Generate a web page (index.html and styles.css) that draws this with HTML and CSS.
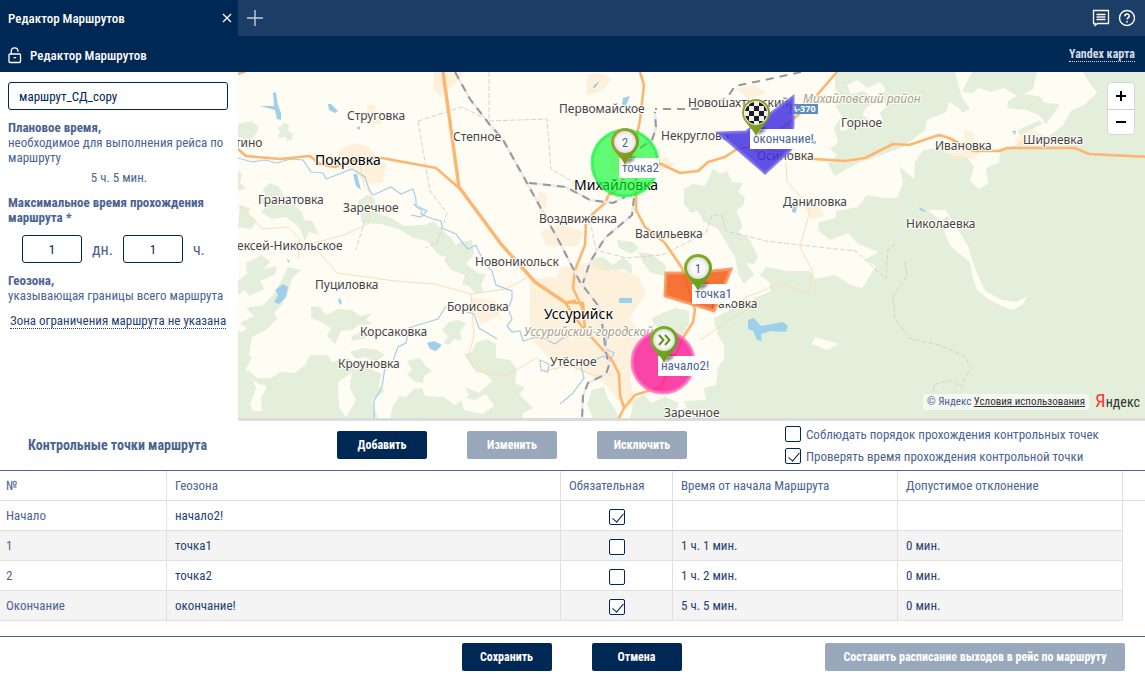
FILE: index.html
```html
<!DOCTYPE html>
<html lang="ru">
<head>
<meta charset="utf-8">
<meta name="viewport" content="width=device-width, initial-scale=1">
<title>Редактор Маршрутов</title>
<link rel="stylesheet" href="styles.css">
</head>
<body>
<div class="app">
  <header class="tabs">
    <div class="tab">
      <span class="tab-title">Редактор Маршрутов</span>
      <button class="icon-btn" type="button" aria-label="Закрыть вкладку">
        <svg width="10" height="10" viewBox="0 0 10 10"><path d="M1 1l8 8M9 1L1 9" stroke="#fff" stroke-width="1.3" fill="none"/></svg>
      </button>
    </div>
    <button class="icon-btn add-tab" type="button" aria-label="Новая вкладка">
      <svg width="18" height="18" viewBox="0 0 18 18"><path d="M9 1v16M1 9h16" stroke="#c3cddb" stroke-width="1.4" fill="none"/></svg>
    </button>
    <div class="tools">
      <button class="icon-btn" type="button" aria-label="Сообщения">
        <svg width="18" height="18" viewBox="0 0 18 18" fill="none" stroke="#fff" stroke-width="1.3"><path d="M1.500 1.500h15v13h-11L3 16.500v-2H1.500z"/><path d="M4.500 5.500h9M4.500 10.500h9" /><path d="M4.500 8h9" stroke="#b5c1d0" stroke-width="2"/></svg>
      </button>
      <button class="icon-btn" type="button" aria-label="Справка">
        <svg width="18" height="18" viewBox="0 0 18 18" fill="none" stroke="#fff" stroke-width="1.400"><circle cx="9" cy="9" r="7.500"/><path d="M6.800 7.300c0-3 4.500-2.900 4.500-.3 0 1.700-2.200 1.700-2.200 3.600M9.100 11.900v1.500" stroke-width="1.500"/></svg>
      </button>
    </div>
  </header>
  <div class="titlebar">
    <svg width="14" height="18" viewBox="0 0 14 18" fill="none" stroke="#fff" stroke-width="1.300"><rect x="1" y="8" width="11.500" height="8.500" rx="1"/><path d="M3.300 8V5.200C3.300 .8 9.700.6 10 5v.8M5.500 11.700h2.600"/></svg>
    <h1 class="title">Редактор Маршрутов</h1>
    <a class="map-link" href="#map">Yandex карта</a>
  </div>

  <div class="work">
    <aside class="side">
      <input class="field name" type="text" value="маршрут_СД_copy" aria-label="Название маршрута">
      <p class="para"><b>Плановое время,</b><br>необходимое для выполнения рейса по маршруту</p>
      <p class="para plan">5 ч. 5 мин.</p>
      <p class="para"><b>Максимальное время прохождения маршрута *</b></p>
      <div class="limits">
        <input class="field num" id="days" type="text" value="1"><label for="days">дн.</label>
        <input class="field num" id="hours" type="text" value="1"><label for="hours">ч.</label>
      </div>
      <p class="para"><b>Геозона,</b><br>указывающая границы всего маршрута</p>
      <a class="zone" href="#zone">Зона ограничения маршрута не указана</a>
    </aside>

    <section class="map" id="map" aria-label="Карта">
      <svg class="canvas" viewBox="238 72 907 346" preserveAspectRatio="xMidYMid slice">
        <defs>
          <linearGradient id="rim" x1="0" y1="0" x2="1" y2="1"><stop offset="0" stop-color="#86b32b"/><stop offset="1" stop-color="#5c9a10"/></linearGradient>
          <linearGradient id="rim2" x1="0" y1="0" x2="1" y2="1"><stop offset="0" stop-color="#a5a53a"/><stop offset="1" stop-color="#6d9612"/></linearGradient>
          <radialGradient id="face"><stop offset="0" stop-color="#fff"/><stop offset=".7" stop-color="#f4f4f4"/><stop offset="1" stop-color="#dcdcdc"/></radialGradient>
          <radialGradient id="shade"><stop offset="0" stop-color="#000" stop-opacity=".5"/><stop offset="1" stop-color="#000" stop-opacity="0"/></radialGradient>
          <clipPath id="disc"><circle cx="0" cy="0" r="11"/></clipPath>
        </defs>
        <rect x="0" y="0" width="1400" height="600" fill="#fffcf4"/>

        <g class="forest">
          <path d="M238 124l13-3 7 5-1 7-7 7-12-3zM283 122l6 3-1 6 5 3-1 6-5 1-1-4-8 1 2-7-3-3 6-3zM238 170l4 4-2 9 6 5-8 3z"/>
          <path d="M262 190l8-7 9 4 5 9-3 6 12 2 9 8 2 8 8 1 7 14-10-3-4 9-6-14-13-10-14 2-11-7 5-6-8-4 8-8zM240 205l10 3-2 7 9 6-6 8-13-2z"/>
          <path d="M358 201l9-6 8 4 2 14 14 5 13 8 21-1 9-4 6 8 10 8 10 14-7 7-14-3-12-14-14-3-12-8-20-6-19-1z"/>
          <path d="M246 263l16-8 8 7-6 7 13-3-2 9-15 6 4 8-15 7-4-6-7 5v-14l9-7zM288 267l13 3-9 8-4 14-6 13-8 8 3 6-11 11-14 7-3 19-12 3-2-22 12-8-7-6 14-7-8-8 18-3 12-14zM238 330l9 7-4 15 9 5-7 14-7 2z"/>
          <path d="M311 306l9 1 6 8 12-6 14 1 8 6 12-3-6 7 7 4-15 1-5 5-12 1-6 13-8-8 4-8-8-5-12-5zM351 337l15-9 8 4-9 6-12 3zM350 352l13-4 14 2 8 5-10 7-10-5-9 2z"/>
          <path d="M458 243l14-3 2 14-8 10 12 9 8 1-5 11 3 6-8 3-7-8-7-2 3-9-14-5-7-10zM449 322l9-2 8 3-6 9 2 9-8-2-5 6-5-2 4-7-6-6zM407 361l13-3 5 7 7 6-8 5-1 7-7-1-9-7 5-5z"/>
          <path d="M432 239l8-2-6-11 9 2 3 9 6 17 8 3-4 8-9-3-4-11z"/>
          <path d="M238 368l11 3 8 7 14 0 9-6 15 1 10-8 5-10 18 0 4 7 15-4 10 7 12-3 5 9 8 3-4 12 13 9 15 2 8-8 8-1 3 8 19 1 11 8 14-10-4-8 14 6 13-12-6-7-10-2-8-11-4-7 8-2 4-9 10-4 10 5 0 14 14 2 7 9-2 14 10 5-6 6 14 14-10 5 0 10h-290z"/>
          <path d="M589 259l14-2 10 8 10-8 9 8 0 9-10-5-14 2-13-2zM617 240l16 2 6 6-8 6-12-6zM638 252l14 2 14 12-1 10-14-3-8-10zM652 318l10-5 14-5 13 3 0 12-6 12-15-6-14-4z"/>
          <path d="M592 390l12-3 4 12 13 20h-28l-6-15zM634 400l10-6 7 9 14-6 14 6-3 7 9 8h-55z"/>
          <path d="M684 189l9-5 12 2 8-17 7 5 7-3 5 11 11 1-5 9 7 5-2 9-7 4 7 17-5 5 12 8 8 17-4 7-8-1 8 12-10 9-6-10-3-17-8-13-9-15-15-8-5-10-7 2-7-9z"/>
          <path d="M835 72h120l-4 9 8 7 4 15-6 4-8-5-3 10-19 8-2 10-22 17-47 17-21 12-7-12 9-9-7-6 8-7-4-14 8-12-7-10 8-5-8-12zM947 72h8l7 26 8 11-7 4-11-12zM962 92l10-20h65l-4 17-14 8-15-9-13 4-13-4-5 5zM1008 101l12-7 19 2 6 7 15 1-6 9-8 11-7-9-13-5-19-2zM1018 130l22-10 2 4-22 12z"/>
          <path d="M1072 72h73v346H690l-6-17 22-1-2-12 12-3 2-18 6-8 0-14-8-13-2-14 12-6 14-10 7 4 9-9 14-5 0-9-10-8 6-8 22 4 22 0 5 8 20-4 16 10 11 3 14-22-12-6 14-8-20-8-10-11-18 7-12-10 1-8 17-4 0-7 22-4 9-12 18 3 12 0 6-16-4-16 15 13 1-17 8-12 16-2 15 8 12 0 8 11-4 14 9 8 9-6-2-15 13-5 1-11 18-8 5-6 12 6 14-8 14-11 8-14 14-7 12-11-10-14-11-22-9-8-9-13z"/>
        </g>
        <path class="bare" d="M700 330l10-9 8 10-4 10 7 9-1 15-14 15-8 3zM950 245h18l5 18 7 17 5 11 17 9 14 2 12-6-6 9-10 5-10-4-14-7-11-9-4-12-3-16-14-11zM812 344l3-7 24 7-12 6zM847 85l10-5 11 8 12-6 6 8-13 7-10-6-12 3zM867 107l12-8 8 6-7 8 3 8-12-1-9-5zM840 118l12 2-5 10-7 1zM950 245l-6-14 6-15-10 4-12-10 18 0 15 25 6 10zM250 405l6-17-3-8 6 4 8 2-6 12 1 13-9 0zM338 382l14-10-2 16 6 12-10 17-7-10zM372 400l12-8 7-10 8 16-6 8-3 12-12 0zM460 396l14 4 12-6 8 12-12 8-18-4z"/>
        <path fill="#fde9c9" opacity=".6" d="M434 72h30l-10 13-14 12-7-9zM341 148l15-5 13 4 8 11 9 6-3 19-15 1-14-12-20-10zM366 105h8l8 19-10 0zM588 74l16 0 8 6-13 12-13 4zM540 232l20-8 24 8-6 14-32 0zM560 268l40-8 6 10 8-2 24 8 8 18-10 14-14 24-22-2-24-4-24 6-17 2zM530 282l18-6 36 8 30-2 9 16-7 12 20 15 2 20-8 36 6 22-10 6-22-26-30-16-26-10-18-20zM470 297l25 4 5 14-20 10-6-18zM950 150l22-1 8 4-8 6-22 0zM964 130l9 2 2 18-11 0zM1015 139l15-10 14 6 2 12-28 0zM538 192l9 2-1 14-9-4zM735 88l20-3 12 8-18 6zM610 150l24-6 8 12-20 20-12-6zM650 160l16-3 8 8-16 6zM805 206l14-2 6 12-14 4z"/>

        <g class="lines">
          <path stroke="#d9d2ca" stroke-dasharray="5 2" d="M489 72v49l58-2 4 50 24 14 18-2M418 121l12 70 17 22-10 30-12 5M418 121l44-14 28 14M365 220l-9 30M590 220l6 30 30 8 36-3 44-22 6-18 10 0 4 16 40 10 70 8 20 2 30 28 2-30 8-5M905 262l2 14-14 20 2 22 14 20 33 8 22 10 7 12-10 18M932 405l2-20 15-5 15 8"/>
          <path stroke="#fddcb8" d="M238 205l14 12 10 12 26-2 12 12-2 20M317 250l20 23 58 8 40 3 36 10 35-5 22-12M360 165l4 18 7 12-2 28-25 12-30 8M471 294l3 42-6 20 5 10 15 9 20 0 30-18M540 371l30-5 26 10 16-2M742 310l2-12 18-7 20-9 20 10 7 0 4-20-13-25 10-36-10-15-13-14-1-20M700 340l30-20 20-12"/>
          <g stroke="#a4cfe8" stroke-width="1.200">
            <path d="M238 158l14 4 13-2 12 3 14-4 12 1 8 12 12 1 3 6 8-3 18-7 5 3 8 5 4 12 4 6 18-8 10 7 12-5 3 10v8l6 3-1 4 12 5 8 2 1 7 14 6 6 8 6 7 8-4 2 5 7 13 7 8 4 14 16 6 0 8-4 10 4 10-5 7 5 6 8-1 3 10 13-4 9 2 10 5 9-7 17-2 14-3 12 3-1 14 8 4-4 8-7-5-8 4-14 6 3 12-12 16-12 10"/>
            <path d="M413 204l14 7-6 6-10-2M446 306l-8 13-17 5-12 4-3 15-8 4-5 14-8 6-3 20-8 14 0 18M460 310l14 4 5 14 10 6 8 5M540 360l9 4-1 8-7-2z"/>
          </g>
          <g stroke="#fdb66f" stroke-width="2.600" stroke-linejoin="round">
            <path d="M238 149l8 7 34 3 30-3 10 8 15 3 17-6 30-3 54 10 23 20"/>
            <path d="M573 303l10 0 2 27 27 30 7 14 1 21 4 13M610 192l-5 11-19 17-1 25-10 25-2 18 10 22M566 304l14 20 5 6"/>
            <path stroke-width="3.400" d="M443 72l16 115 42 57 34 38 31 21 10-2"/>
            <path d="M640 72l4 13-4 35-4 20-8 25-8 22-10 8M636 165l0 45 9 17 20 16 17 25 13 42-2 12-10 16-22 49-26 8-11 13-6 12"/>
            <path d="M632 160l29 4 19 9 18-2 10-9 17-5 12-8 18-3 17 4 42 9 31 2 20-3 28-14 16 1 30-10 10 3 25 13 25 0 8-3h68l14 6 60 3"/>
            <path d="M837 72l-32 37-50 43M238 74l8-3"/>
          </g>
          <g stroke="#eceaee" stroke-width="2.600"><path id="rail1" d="M455 72l15 27 20 26 12 13 25 45 33 60 20 39 20 26 6 44 3 13-3 9-18 9-5 13-1 24"/><path id="rail2" d="M529 183l37 4 24 13 23 3 12-6M634 198l-2 17-27 23-15 24-7 21M640 148l12-8 4-12-1-16"/></g>
          <g stroke="#98989a" stroke-width="2" stroke-dasharray="8 6"><use href="#rail1"/><use href="#rail2"/><path d="M801 72l-41 9-25 5-8 12-27 11h-45"/></g>
        </g>
        <path fill="#9fd0ea" d="M273 92l3 1 2 12 3 8 0 7-4-1-2-9-15-4 14 0zM328 104l3 0 7 7-3 2-6-3zM275 290l8-6 5 3-2 10-7 7-5-2 4-7zM427 343l7-2 8 4-6 6-6-2zM748 320l6-2 7 8 22-4 5 4-2 6-16-1-9 3 1 7-5-1-4-9-5-2zM594 85l6-4-5 7-2 0zM623 98l7-2-2 5-3 6-3-3zM792 207l5-1-1 7-4-1zM1012 131l4 0-1 4zM919 207l6 3 0 2-5-2zM356 128l4-2 0 4zM353 174l4 0 4 16-5-4zM338 300l2-2 2 5-2 2zM287 259l3 2-2 2zM619 298h13v5h-13zM813 141h3v3h-3z"/>
        <g><rect x="790" y="104" width="28" height="10" fill="#5b8cc4"/><text x="791" y="112" class="road-no">А-370</text></g>

        <g class="towns">
          <text x="347" y="120">Струговка</text><text x="453" y="141">Степное</text><text x="228" y="147">ятино</text>
          <text x="258" y="204">Гранатовка</text><text x="343" y="212">Заречное</text><text x="230" y="250">лексей-Никольское</text>
          <text x="315" y="289">Пуциловка</text><text x="360" y="336">Корсаковка</text><text x="338" y="368">Кроуновка</text>
          <text x="447" y="311">Борисовка</text><text x="475" y="266">Новоникольск</text><text x="559" y="113">Первомайское</text>
          <text x="688" y="107">Новошахтинский</text><text x="661" y="140">Некруглово</text><text x="757" y="160">Осиновка</text>
          <text x="783" y="206">Даниловка</text><text x="539" y="223">Воздвиженка</text><text x="635" y="238">Васильевка</text>
          <text x="711" y="308">Раковка</text><text x="550" y="366">Утёсное</text><text x="664" y="417">Заречное</text>
          <text x="841" y="127">Горное</text><text x="935" y="150">Ивановка</text><text x="1023" y="144">Ширяевка</text><text x="906" y="228">Николаевка</text>
          <g class="city"><text x="315" y="165">Покровка</text><text x="574" y="190">Михайловка</text><text x="544" y="319">Уссурийск</text></g>
          <g class="district"><text x="803" y="103">Михайловский район</text><text x="524" y="336">Уссурийский городской</text></g>
        </g>

        <g stroke-width="3">
          <circle cx="625" cy="163" r="33" fill="#00fa28" fill-opacity=".62" stroke="#19f040" stroke-opacity=".7"/>
          <circle cx="663" cy="362" r="31" fill="#f81c98" fill-opacity=".82" stroke="#ff70bc" stroke-opacity=".8"/>
          <path d="M719 133l27-1 47-35v28l-2 24-26 24z" fill="#4030dc" fill-opacity=".84" stroke="#7468ee" stroke-opacity=".85"/>
          <path d="M666 273l27 0 38-4-17 42-49-15z" fill="#f2601a" fill-opacity=".88" stroke="#f79660" stroke-opacity=".9"/>
        </g>

        <g class="pins">
          <g><rect x="619" y="158" width="40" height="20"/><text x="622" y="172">точка2</text></g>
          <g><rect x="692" y="284" width="40" height="20"/><text x="695" y="298">точка1</text></g>
          <g><rect x="658" y="356" width="50" height="20"/><text x="661" y="370">начало2!</text></g>
          <g><rect x="750" y="129" width="62" height="20"/><text x="753" y="143">окончание!</text></g>
          <g transform="translate(625 142)"><ellipse cx="5" cy="18" rx="8" ry="4" fill="url(#shade)" transform="rotate(-28 5 18)"/><path d="M0 23C-3 15-14 9-14 0a14 14 0 0 1 28 0C14 9 3 15 0 23z" fill="url(#rim2)"/><circle r="11" fill="url(#face)"/><text class="pin-no" x="0" y="5">2</text></g>
          <g transform="translate(698 268)"><ellipse cx="5" cy="18" rx="8" ry="4" fill="url(#shade)" transform="rotate(-28 5 18)"/><path d="M0 23C-3 15-14 9-14 0a14 14 0 0 1 28 0C14 9 3 15 0 23z" fill="url(#rim)"/><circle r="11" fill="url(#face)"/><text class="pin-no" x="0" y="5">1</text></g>
          <g transform="translate(664 340)"><ellipse cx="5" cy="18" rx="8" ry="4" fill="url(#shade)" transform="rotate(-28 5 18)"/><path d="M0 23C-3 15-14 9-14 0a14 14 0 0 1 28 0C14 9 3 15 0 23z" fill="url(#rim)"/><circle r="11" fill="url(#face)"/><path d="M-5-5l4.500 5-4.500 5M1-5l4.500 5L1 5" fill="none" stroke="#5d9414" stroke-width="2"/></g>
          <g transform="translate(756 113)"><ellipse cx="5" cy="18" rx="8" ry="4" fill="url(#shade)" transform="rotate(-28 5 18)"/><path d="M0 23C-3 15-14 9-14 0a14 14 0 0 1 28 0C14 9 3 15 0 23z" fill="url(#rim2)"/><circle r="12" fill="#eee"/><path clip-path="url(#disc)" fill="#1c1c1c" d="M-7-12h5v5h-5zM3-12h5v5H3zM-12-7h5v5h-5zM-2-7h5v5h-5zM8-7h5v5H8zM-7-2h5v5h-5zM3-2h5v5H3zM-12 3h5v5h-5zM-2 3h5v5h-5zM8 3h5v5H8zM-7 8h5v5h-5zM3 8h5v5H3z"/></g>
        </g>
      </svg>
      <div class="zoom">
        <button type="button" aria-label="Приблизить"><svg width="10" height="10" viewBox="0 0 10 10"><path d="M5 0v10M0 5h10" stroke="#000" stroke-width="2"/></svg></button>
        <button type="button" aria-label="Отдалить"><svg width="10" height="10" viewBox="0 0 10 10"><path d="M0 5h10" stroke="#000" stroke-width="2"/></svg></button>
      </div>
      <div class="credits"><span class="copy">© Яндекс <a href="#terms">Условия использования</a></span><span class="brand"><span class="ya">Я</span>ндекс</span></div>
    </section>
  </div>

  <section class="bar">
    <h2 class="bar-title">Контрольные точки маршрута</h2>
    <div class="actions">
      <button class="btn" type="button">Добавить</button>
      <button class="btn" type="button" disabled>Изменить</button>
      <button class="btn" type="button" disabled>Исключить</button>
    </div>
    <div class="options">
      <label class="option"><input class="check" type="checkbox">Соблюдать порядок прохождения контрольных точек</label>
      <label class="option"><input class="check" type="checkbox" checked>Проверять время прохождения контрольной точки</label>
    </div>
  </section>

  <table class="points">
    <colgroup><col class="c-no"><col class="c-zone"><col class="c-must"><col class="c-time"><col class="c-time"><col class="c-rest"></colgroup>
    <thead><tr><th>№</th><th>Геозона</th><th>Обязательная</th><th>Время от начала Маршрута</th><th>Допустимое отклонение</th><th></th></tr></thead>
    <tbody>
      <tr><td>Начало</td><td>начало2!</td><td><input class="check" type="checkbox" checked aria-label="Обязательная: начало2!"></td><td></td><td></td><td></td></tr>
      <tr><td>1</td><td>точка1</td><td><input class="check" type="checkbox" aria-label="Обязательная: точка1"></td><td>1 ч. 1 мин.</td><td>0 мин.</td><td></td></tr>
      <tr><td>2</td><td>точка2</td><td><input class="check" type="checkbox" aria-label="Обязательная: точка2"></td><td>1 ч. 2 мин.</td><td>0 мин.</td><td></td></tr>
      <tr><td>Окончание</td><td>окончание!</td><td><input class="check" type="checkbox" checked aria-label="Обязательная: окончание!"></td><td>5 ч. 5 мин.</td><td>0 мин.</td><td></td></tr>
    </tbody>
  </table>

  <footer class="foot">
    <div class="main-actions">
      <button class="btn" type="button">Сохранить</button>
      <button class="btn" type="button">Отмена</button>
    </div>
    <button class="btn wide" type="button" disabled>Составить расписание выходов в рейс по маршруту</button>
  </footer>
</div>
</body>
</html>
```
FILE: styles.css
```css
:root {
  --navy: #002855;
  --blue: #4b6391;
  --ink: #1f426f;
  --line: #e0e0e0;
  --ui: "Roboto Condensed", "Liberation Sans Narrow", Roboto, sans-serif;
}
* { box-sizing: border-box; }
body { margin: 0; background: #fff; color: var(--blue); font: 13px/15px var(--ui); }
h1, h2, p { margin: 0; }
button, input { font: inherit; }

.app { display: flex; flex-direction: column; min-height: 100vh; }

.tabs { display: flex; height: 36px; background: #1b3d66; }
.tab { display: flex; align-items: center; justify-content: space-between; width: 238px; padding: 0 6px 0 8px; background: var(--navy); color: #fff; font-weight: 500; }
.icon-btn { display: flex; padding: 0; border: 0; background: none; cursor: pointer; }
.add-tab { align-items: center; padding: 0 8px; }
.tools { display: flex; align-items: center; gap: 8px; margin-left: auto; padding-right: 9px; }

.titlebar { display: flex; align-items: center; gap: 8px; height: 36px; padding: 2px 10px 0 8px; background: var(--navy); color: #fff; }
.title { font-size: 13px; font-weight: 500; }
.map-link { margin-left: auto; color: #d3dbe6; font-weight: bold; font-size: 12px; text-decoration: none; border-bottom: 1px dotted #d3dbe6; line-height: 13px; }

.work { display: flex; flex: 1; min-height: 349px; }
.side { width: 238px; padding: 10px 8px; }
.field { height: 28px; border: 1px solid var(--navy); border-radius: 3px; background: #fff; color: var(--navy); }
.name { width: 220px; padding: 0 10px; }
.para { margin-top: 10px; }
.plan { margin: 5px 0 10px; text-align: center; }
.limits { display: flex; align-items: center; gap: 10px; padding-left: 14px; margin: 10px 0; font-size: 16px; }
.num { width: 60px; text-align: center; font-size: 13px; }
.zone { display: inline-block; margin: 11px 0 0 2px; color: var(--ink); text-decoration: none; border-bottom: 1px dotted var(--ink); line-height: 14px; white-space: nowrap; }

.map { position: relative; flex: 1; border-bottom: 3px solid #dcdcdc; overflow: hidden; }
.canvas { position: absolute; inset: 0; width: 100%; height: 100%; }
.forest { fill: #e3efda; }
.bare { fill: #fffcf4; }
.lines { fill: none; }
.towns { font: 12px "Noto Sans", "Open Sans", sans-serif; fill: #444; stroke: #fffdf8; stroke-width: 2px; stroke-linejoin: round; paint-order: stroke; }
.city { font-size: 14px; fill: #000; }
.district { font-style: italic; fill: #a3a18c; }
.road-no { font: bold 9px "Open Sans", sans-serif; fill: #fff; }
.pins { font-size: 13px; fill: var(--blue); }
.pins rect { fill: #fff; }
.pin-no { text-anchor: middle; }

.zoom { position: absolute; top: 10px; right: 10px; display: grid; width: 28px; background: #fff; border: 1px solid #d5d8d5; border-radius: 4px; }
.zoom button { display: grid; place-items: center; height: 26px; padding: 0; border: 0; background: none; cursor: pointer; }
.zoom button + button { border-top: 1px solid #d0d0d0; height: 25px; }
.credits { position: absolute; right: 5px; bottom: 6px; display: flex; align-items: center; gap: 6px; }
.copy { padding: 1px 4px; border-radius: 3px; background: #f4f8f1; font-size: 11px; line-height: 14px; }
.copy a { color: #333; }
.brand { color: #333; font-size: 14px; line-height: 20px; }
.ya { color: #f33; font-size: 19px; }

.bar { display: flex; align-items: center; height: 49px; padding: 0 0 1px 28px; }
.bar-title { width: 309px; font-size: 14px; }
.actions { display: flex; gap: 40px; }
.btn { min-width: 90px; height: 28px; padding: 0 10px; border: 0; border-radius: 2px; background: var(--navy); color: #fff; font-weight: bold; font-size: 12px; white-space: nowrap; cursor: pointer; }
.btn:disabled { background: #99a9bb; cursor: default; }
.options { display: grid; gap: 6px; margin-left: 98px; }
.option { display: flex; align-items: center; gap: 5px; height: 16px; font-size: 13px; white-space: nowrap; }

.check { position: relative; flex: none; width: 16px; height: 16px; margin: 0; appearance: none; border: 1px solid var(--navy); border-radius: 2px; background: #fff; }
.check:checked::after { content: ""; position: absolute; left: 5px; top: 1px; width: 5px; height: 10px; border: solid var(--navy); border-width: 0 1px 1px 0; transform: rotate(40deg); }

.points { width: 100%; table-layout: fixed; border-collapse: separate; border-spacing: 0; border-top: 1px solid var(--blue); }
.c-no { width: 167px; }
.c-zone { width: 394px; }
.c-must { width: 112px; }
.c-time { width: 225px; }
.points th, .points td { height: 30px; padding: 0 8px; border: solid var(--line); border-width: 0 1px 1px 0; text-align: left; font-weight: normal; white-space: nowrap; color: var(--ink); }
.points th { color: var(--blue); }
.points th:last-child { border-right: 0; }
.points td:last-child { border: 0; background: #fff; }
.points th:first-child, .points td:first-child { padding-left: 6px; color: var(--blue); }
.points td:nth-child(3) { text-align: center; }
.points td .check { display: block; margin: 2px auto 0; }
.points tbody tr:nth-child(even) { background: #f4f4f4; }

.foot { display: grid; grid-template-columns: 1fr auto 1fr; align-items: start; margin-top: 15px; height: 45px; padding: 6px 20px 0 18px; border-top: 1px solid var(--blue); }
.main-actions { grid-column: 2; display: flex; gap: 40px; }
.wide { justify-self: end; width: 300px; }
```
